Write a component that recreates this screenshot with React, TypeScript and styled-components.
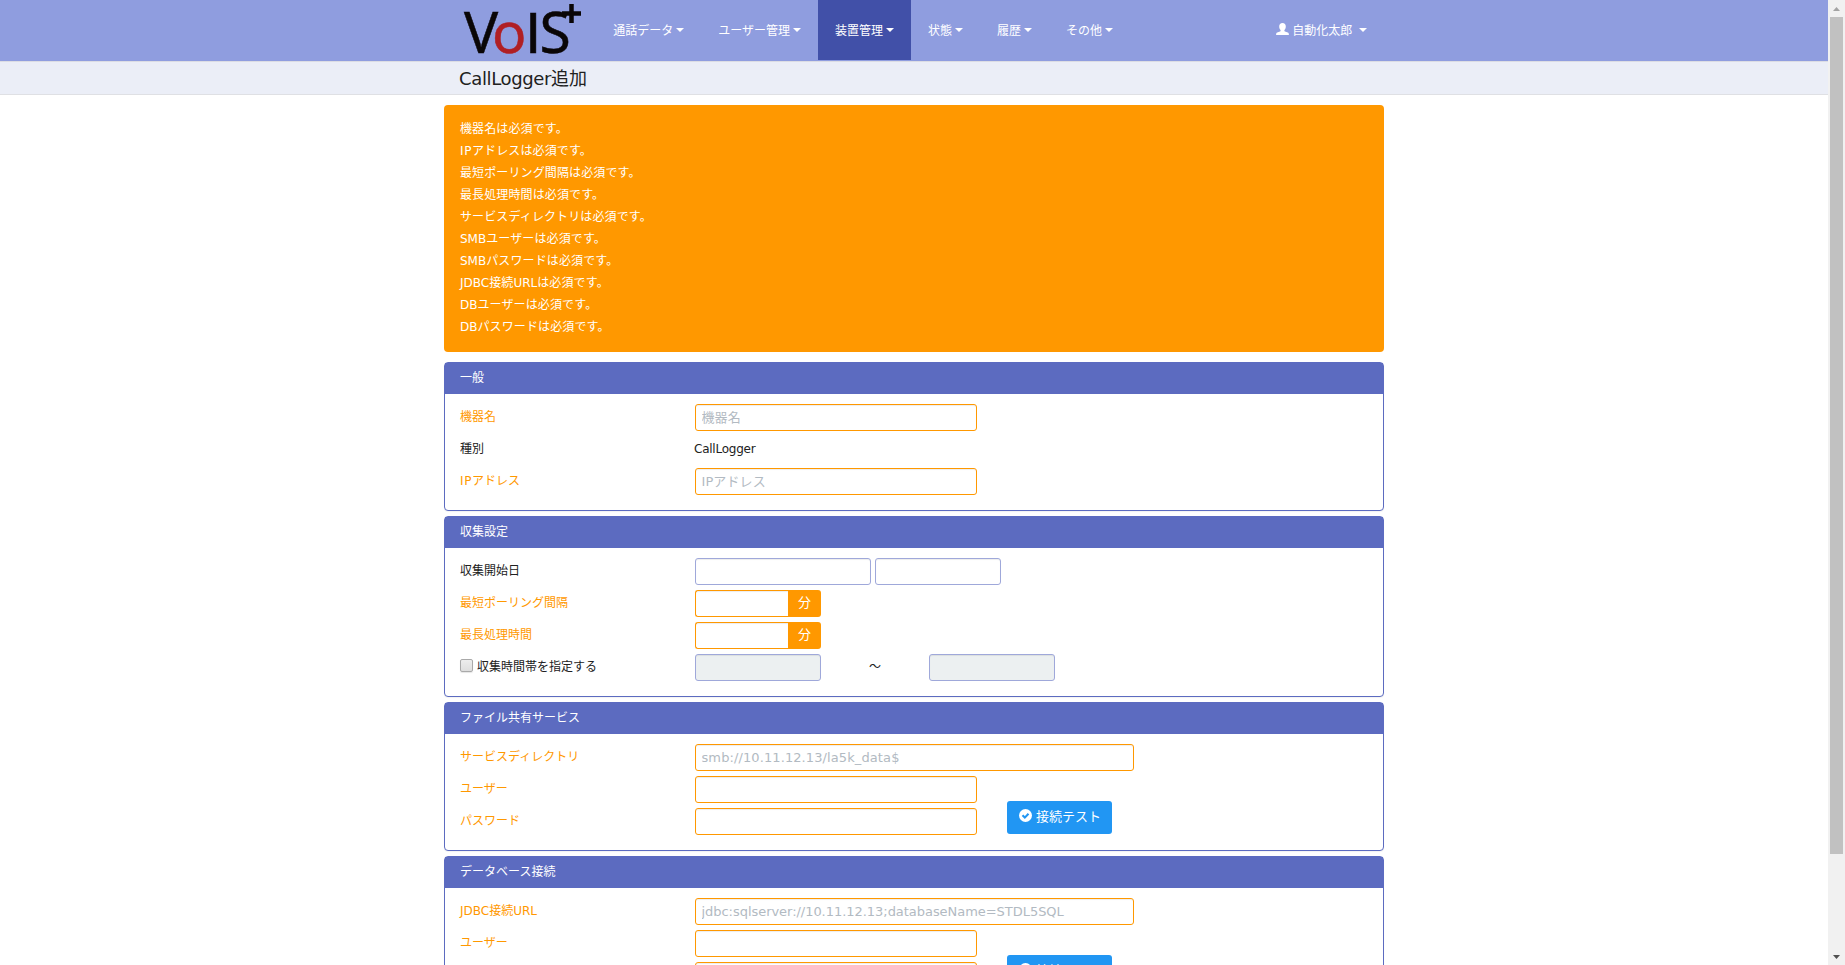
import React from 'react';
import styled, { createGlobalStyle, css } from 'styled-components';

const GlobalStyle = createGlobalStyle`
  *, *::before, *::after { box-sizing: border-box; }
  html, body { margin: 0; padding: 0; background: #fff; overflow: hidden; }
  body, input, button {
    font-family: 'DejaVu Sans', 'Noto Sans CJK JP', sans-serif;
    font-size: 12px;
    color: #212121;
  }
`;

const Window = styled.div`
  display: flex;
  height: 965px;
  overflow: hidden;
`;

const Page = styled.div`
  flex: 1;
  min-width: 0;
  overflow: hidden;
`;

const Latin = styled.span<{ $spacing: number }>`
  letter-spacing: ${(p) => p.$spacing}em;
`;

const Container = styled.div`
  width: 940px;
  margin: 0 auto;
`;

const Navbar = styled.nav`
  height: 62px;
  background: #8f9ddf;
  border-bottom: 1px solid #dcdde4;
`;

const NavInner = styled(Container)`
  display: flex;
  align-items: flex-start;
`;

const Brand = styled.a`
  display: block;
  width: 152px;
  height: 60px;
`;

const NavItem = styled.a<{ $active?: boolean }>`
  display: flex;
  align-items: center;
  height: 60px;
  padding: 0 17px 2px 17.2px;
  color: #fff;
  white-space: nowrap;
  background: ${(p) => (p.$active ? '#4150a8' : 'transparent')};
`;

const UserItem = styled(NavItem)`
  margin-left: auto;
  padding: 0 17px 2px 16px;
`;

const UserName = styled.span`
  margin: 0 4px 0 3px;
`;

const Caret = styled.span`
  margin: 1px 0 0 2.8px;
  border: 4px solid transparent;
  border-top-color: #fff;
  border-bottom: 0;
`;

const TitleBar = styled.div`
  height: 33px;
  background: #ebeef7;
  border-bottom: 1px solid #dfe0e4;
`;

const Title = styled.h1`
  margin: 0;
  padding: 1px 0 0 15px;
  font-size: 18px;
  font-weight: 400;
  line-height: 32px;
`;

const Alert = styled.div`
  margin-top: 10px;
  height: 247px;
  padding: 13px 16px;
  border-radius: 4px;
  background: #ff9800;
  color: #fff;
  line-height: 22px;
`;

const AlertLine = styled.div`
  letter-spacing: 0.12px;
`;

const Panel = styled.section`
  margin-bottom: 5px;
  border: 1px solid #5c6bc0;
  border-radius: 4px;
  background: #fff;
  box-shadow: 0 1px 1px rgba(0, 0, 0, 0.05);

  ${Alert} + & { margin-top: 10px; }
`;

const PanelHeading = styled.h2`
  margin: 0;
  height: 31px;
  padding-left: 15px;
  background: #5c6bc0;
  color: #fff;
  font-size: 12px;
  font-weight: 400;
  line-height: 31px;
`;

const PanelBody = styled.div`
  padding: 10px 15px;
`;

const Row = styled.div`
  display: flex;
  height: 27px;
  margin-bottom: 5px;
`;

const Label = styled.label<{ $error?: boolean }>`
  display: flex;
  align-items: center;
  width: 235px;
  height: 23px;
  color: ${(p) => (p.$error ? '#ff9800' : '#212121')};
`;

const StaticText = styled.span`
  margin-left: -1px;
  line-height: 26px;
`;

const Input = styled.input<{ $w: number; $error?: boolean; $joined?: boolean; $spacing?: number }>`
  width: ${(p) => p.$w}px;
  height: 27px;
  padding: 0 6px 0 5.5px;
  border: 1px solid ${(p) => (p.$error ? '#ff9800' : '#9fa8da')};
  border-radius: 3px;
  outline: none;
  background: #fff;
  box-shadow: inset 0 1px 1px rgba(0, 0, 0, 0.075);
  font-size: 13px;
  ${(p) => p.$joined && css`
    border-right: 0;
    border-radius: 3px 0 0 3px;
  `}
  &::placeholder {
    color: #b2bac2;
    opacity: 1;
    letter-spacing: ${(p) => p.$spacing ?? 0.1}px;
  }
  &:disabled { background: #ecf0f1; }
`;

const DateFields = styled.div`
  display: flex;
  gap: 4px;
`;

const Unit = styled.span`
  width: 33px;
  height: 27px;
  border-radius: 0 3px 3px 0;
  background: #ff9800;
  color: #fff;
  font-size: 13px;
  line-height: 25px;
  text-align: center;
`;

const Tilde = styled.span`
  width: 108px;
  line-height: 27px;
  text-align: center;
`;

const Checkbox = styled.span`
  width: 13px;
  height: 13px;
  margin: 0 4px 0 0;
  border: 1px solid #a9a9a9;
  border-radius: 2px;
  background: linear-gradient(#ededed, #dedede);
  box-shadow: 0 1px 1px rgba(0, 0, 0, 0.1);
`;

const Credentials = styled.div`
  display: flex;
  align-items: flex-start;
  gap: 30px;
`;

const TestButton = styled.button`
  display: flex;
  align-items: center;
  gap: 4px;
  width: 105px;
  height: 33px;
  margin-top: 25px;
  padding: 0 0 4px 12px;
  border: 0;
  border-radius: 3px;
  background: #2196f3;
  color: #fff;
  font-size: 13px;
  white-space: nowrap;
`;

const ScrollTrack = styled.div`
  display: flex;
  flex-direction: column;
  align-items: center;
  width: 17px;
  background: #f1f1f1;
`;

const ScrollArrow = styled.div`
  display: flex;
  align-items: center;
  justify-content: center;
  height: 17px;
`;

const ScrollThumb = styled.div`
  width: 13px;
  height: 837px;
  margin-bottom: auto;
  background: #c1c1c1;
`;

const Logo = () => (
  <svg width="152" height="60" viewBox="0 0 152 60" fontFamily="'Noto Sans', sans-serif" fontSize="57">
    <text x="20" y="53" fill="#0a0607" stroke="#0a0607" strokeWidth="0.5">
      V<tspan x="48" fill="#b01f24" stroke="#b01f24">o</tspan>
      <tspan x="81.2" fontFamily="Lato" fontSize="56.5">I</tspan>
      <tspan x="95.5">S</tspan>
    </text>
    <path d="M118 13.5h19M127.5 4v19" stroke="#0a0607" strokeWidth="4.5" fill="none" />
  </svg>
);

const UserIcon = () => (
  <svg width="13" height="12" viewBox="0 0 13 12" fill="#fff">
    <path d="M6.5 0C4.4 0 3.2 1.3 3.2 3.4c0 1.5.5 2.7 1.3 3.5.3.8.1 1.2-.5 1.5L1.2 9.6C.4 10 .1 10.6.1 12h12.8c0-1.400-.3-2-1.100-2.400L9 8.400c-.6-.3-.8-.7-.5-1.500.8-.8 1.300-2 1.300-3.500C9.800 1.300 8.600 0 6.500 0z" />
  </svg>
);

const OkIcon = () => (
  <svg width="13" height="13" viewBox="0 0 13 13">
    <circle cx="6.5" cy="6.5" r="6.5" fill="#fff" />
    <path d="M3.5 6.3l2.3 2.3 3.7-3.9" fill="none" stroke="#2196f3" strokeWidth="2.1" />
  </svg>
);

const spacing: Record<string, number> = { CallLogger: -0.02, IP: 0.05 };

const text = (value: string) =>
  value.split(/([A-Za-z]+)/).map((part, i) =>
    i % 2 ? <Latin key={i} $spacing={spacing[part] ?? 0}>{part}</Latin> : part,
  );

const menu = ['通話データ', 'ユーザー管理', '装置管理', '状態', '履歴', 'その他'];

const errors = [
  '機器名', 'IPアドレス', '最短ポーリング間隔', '最長処理時間', 'サービスディレクトリ',
  'SMBユーザー', 'SMBパスワード', 'JDBC接続URL', 'DBユーザー', 'DBパスワード',
];

interface ConnectionProps {
  title: string;
  label: string;
  placeholder: string;
  spacing?: number;
}

const ConnectionPanel = ({ title, label, placeholder, spacing: letterSpacing }: ConnectionProps) => (
  <Panel>
    <PanelHeading>{title}</PanelHeading>
    <PanelBody>
      <Row>
        <Label $error><span>{text(label)}</span></Label>
        <Input $w={439} $error $spacing={letterSpacing} placeholder={placeholder} />
      </Row>
      <Credentials>
        <div>
          <Row><Label $error>ユーザー</Label><Input $w={282} $error /></Row>
          <Row><Label $error>パスワード</Label><Input $w={282} $error type="password" /></Row>
        </div>
        <TestButton type="button"><OkIcon />接続テスト</TestButton>
      </Credentials>
    </PanelBody>
  </Panel>
);

export default function App() {
  return (
    <Window>
      <GlobalStyle />
      <Page>
        <Navbar>
          <NavInner>
            <Brand><Logo /></Brand>
            {menu.map((m) => (
              <NavItem key={m} $active={m === '装置管理'}>{m}<Caret /></NavItem>
            ))}
            <UserItem><UserIcon /><UserName>自動化太郎</UserName><Caret /></UserItem>
          </NavInner>
        </Navbar>
        <TitleBar>
          <Container><Title>{text('CallLogger追加')}</Title></Container>
        </TitleBar>
        <Container>
          <Alert>
            {errors.map((e) => <AlertLine key={e}>{text(`${e}は必須です。`)}</AlertLine>)}
          </Alert>

          <Panel>
            <PanelHeading>一般</PanelHeading>
            <PanelBody>
              <Row><Label $error>機器名</Label><Input $w={282} $error placeholder="機器名" /></Row>
              <Row><Label>種別</Label><StaticText>{text('CallLogger')}</StaticText></Row>
              <Row><Label $error><span>{text('IPアドレス')}</span></Label><Input $w={282} $error placeholder="IPアドレス" /></Row>
            </PanelBody>
          </Panel>

          <Panel>
            <PanelHeading>収集設定</PanelHeading>
            <PanelBody>
              <Row>
                <Label>収集開始日</Label>
                <DateFields><Input $w={176} /><Input $w={126} /></DateFields>
              </Row>
              <Row><Label $error>最短ポーリング間隔</Label><Input $w={93} $error $joined /><Unit>分</Unit></Row>
              <Row><Label $error>最長処理時間</Label><Input $w={93} $error $joined /><Unit>分</Unit></Row>
              <Row>
                <Label><Checkbox role="checkbox" aria-checked="false" />収集時間帯を指定する</Label>
                <Input $w={126} disabled />
                <Tilde>～</Tilde>
                <Input $w={126} disabled />
              </Row>
            </PanelBody>
          </Panel>

          <ConnectionPanel
            title="ファイル共有サービス"
            label="サービスディレクトリ"
            placeholder="smb://10.11.12.13/la5k_data$"
          />
          <ConnectionPanel
            title="データベース接続"
            label="JDBC接続URL"
            placeholder="jdbc:sqlserver://10.11.12.13;databaseName=STDL5SQL"
            spacing={-0.04}
          />
        </Container>
      </Page>
      <ScrollTrack>
        <ScrollArrow>
          <svg width="7" height="4" viewBox="0 0 7 4"><path d="M0 4L3.5 0 7 4z" fill="#a3a3a3" /></svg>
        </ScrollArrow>
        <ScrollThumb />
        <ScrollArrow>
          <svg width="7" height="4" viewBox="0 0 7 4"><path d="M0 0L3.5 4 7 0z" fill="#505050" /></svg>
        </ScrollArrow>
      </ScrollTrack>
    </Window>
  );
}
